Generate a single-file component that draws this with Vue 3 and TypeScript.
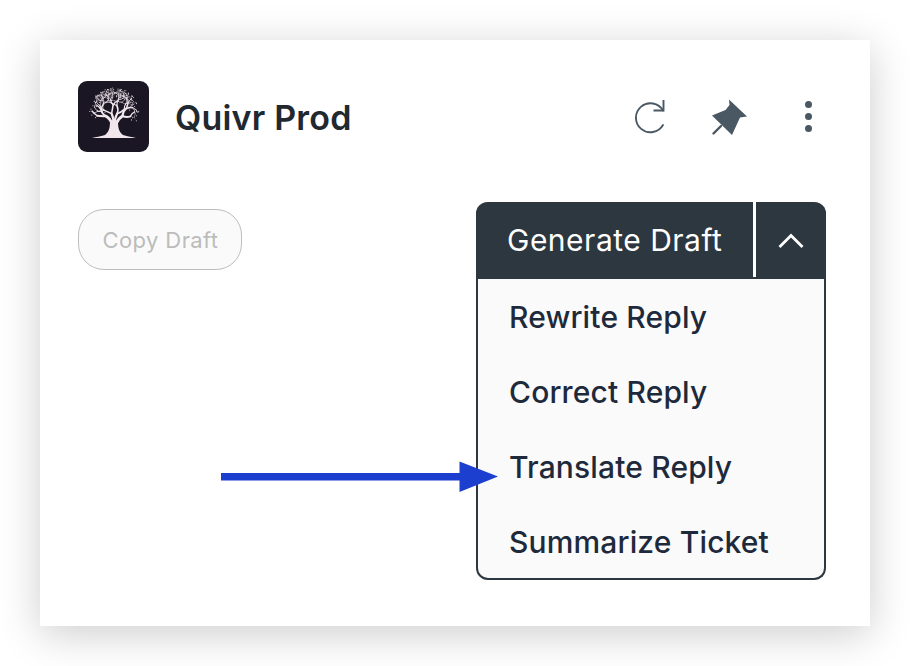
<script setup lang="ts">
interface Branch { d: string; w: number }
interface Dot { x: number; y: number }

const items: string[] = ['Rewrite Reply', 'Correct Reply', 'Translate Reply', 'Summarize Ticket']

// Deterministic branching tree for the logo (logo box is 71x71).
const branches: Branch[] = []
const tips: Dot[] = []
const cx = 36
const cy = 32
const crown = 23

function grow(x: number, y: number, angle: number, len: number, w: number, depth: number, seed: number): void {
  const wobble = Math.sin(seed * 12.9898) * 0.42
  const a = angle + wobble
  const mx = x + Math.cos(angle - wobble) * len * 0.5
  const my = y + Math.sin(angle - wobble) * len * 0.5
  const ex = mx + Math.cos(a) * len * 0.5
  const ey = my + Math.sin(a) * len * 0.5
  if (Math.hypot(ex - cx, ey - cy) > crown) {
    tips.push({ x: x + Math.cos(a) * 2.4, y: y + Math.sin(a) * 2.4 })
    return
  }
  branches.push({ d: `M${x.toFixed(1)} ${y.toFixed(1)}Q${mx.toFixed(1)} ${my.toFixed(1)} ${ex.toFixed(1)} ${ey.toFixed(1)}`, w })
  if (depth === 0) {
    tips.push({ x: ex + Math.cos(a) * 2, y: ey + Math.sin(a) * 2 })
    return
  }
  const spread = 0.42 + Math.abs(Math.sin(seed * 7.13)) * 0.25
  grow(ex, ey, a - spread, len * 0.78, w * 0.7, depth - 1, seed * 1.31 + 1.7)
  grow(ex, ey, a + spread, len * 0.78, w * 0.7, depth - 1, seed * 1.57 + 2.9)
}

const up = -Math.PI / 2
grow(34, 43, up - 0.68, 11, 2.8, 6, 1.3)
grow(38, 43, up + 0.68, 11, 2.8, 6, 2.1)
grow(35, 43, up - 0.14, 11, 2.2, 6, 3.7)
grow(37, 43, up + 0.2, 11, 2.2, 6, 4.9)
</script>

<template>
  <main class="page">
    <section class="card">
      <header class="header">
        <div class="brand">
          <div class="logo">
            <svg viewBox="0 0 71 71" width="71" height="71" aria-hidden="true">
              <path d="M32 40H40C40 47 41 51 45 54C50 55.500 54 56 58 57H14C18 56 22 55.500 27 54C31 51 32 47 32 40Z" fill="#f1e6eb" />
              <g fill="none" stroke="#f1e6eb" stroke-linecap="round">
                <path v-for="(b, i) in branches" :key="i" :d="b.d" :stroke-width="b.w" />
              </g>
              <circle v-for="(t, i) in tips" :key="i" :cx="t.x" :cy="t.y" r="0.55" fill="#e6dae0" />
            </svg>
          </div>
          <h1 class="title">Quivr Prod</h1>
        </div>
        <div class="actions">
          <svg class="icon" viewBox="0 0 32 36" width="32" height="36" aria-hidden="true">
            <path d="M29 26A14.500 14.500 0 1 1 29 11.500" fill="none" stroke="currentColor" stroke-width="1.9" stroke-linecap="round" />
            <path d="M29.500 1V11.500H19.500" fill="none" stroke="currentColor" stroke-width="1.9" />
          </svg>
          <svg class="icon pin" viewBox="0 0 38 38" width="38" height="38" aria-hidden="true">
            <path d="M19 1.500L37 18.500L30 19.500L22 37L2 17.500L15.500 12L19.500 7Z" fill="currentColor" />
            <path d="M3.500 35.500L11 28" stroke="currentColor" stroke-width="2.400" stroke-linecap="round" />
          </svg>
          <span class="dots"><i></i><i></i><i></i></span>
        </div>
      </header>

      <div class="controls">
        <button class="copy" type="button" disabled>Copy Draft</button>
        <div class="dropdown">
          <div class="bar">
            <button class="generate" type="button">Generate Draft</button>
            <button class="toggle" type="button" aria-label="Collapse">
              <svg viewBox="0 0 26 16" width="26" height="16" aria-hidden="true">
                <path d="M1.500 14L13 2.500L24.500 14" fill="none" stroke="#fff" stroke-width="2.800" />
              </svg>
            </button>
          </div>
          <ul class="menu">
            <li v-for="item in items" :key="item">{{ item }}</li>
          </ul>
        </div>
      </div>

      <svg class="arrow" viewBox="0 0 278 34" width="278" height="34" aria-hidden="true">
        <path d="M0 13H238.500V1.500L277 16.500L238.500 32V20.500H0Z" fill="#1c3fd0" />
      </svg>
    </section>
  </main>
</template>

<style>
html,
body {
  margin: 0;
  background: #ffffff;
}
</style>

<style scoped>
.page {
  width: 910px;
  height: 666px;
  box-sizing: border-box;
  padding: 40px;
  overflow: hidden;
  font-family: Inter, "Liberation Sans", sans-serif;
}

.card {
  position: relative;
  box-sizing: border-box;
  width: 830px;
  height: 586px;
  padding: 41px 44px 0 38px;
  background: #ffffff;
  box-shadow: 0 8px 40px rgba(0, 0, 0, 0.2);
}

.header {
  display: flex;
  align-items: center;
  justify-content: space-between;
  height: 71px;
}

.brand {
  display: flex;
  align-items: center;
  gap: 26px;
}

.logo {
  width: 71px;
  height: 71px;
  border-radius: 9px;
  overflow: hidden;
  background: #1a1624;
}

.logo svg {
  display: block;
}

.title {
  margin: 2px 0 0;
  font-size: 34px;
  line-height: 40px;
  font-weight: 600;
  letter-spacing: 0.2px;
  color: #1f292f;
}

.actions {
  display: flex;
  align-items: center;
  color: #4a5863;
  margin-right: 14px;
}

.icon {
  display: block;
}

.pin {
  margin-left: 44px;
}

.dots {
  display: flex;
  flex-direction: column;
  gap: 5px;
  margin-left: 57px;
}

.dots i {
  display: block;
  width: 7px;
  height: 7px;
  border-radius: 50%;
  background: currentColor;
}

.controls {
  display: flex;
  align-items: flex-start;
  justify-content: space-between;
  margin-top: 50px;
}

.copy {
  width: 164px;
  height: 61px;
  margin-top: 7px;
  padding: 0 0 0 1px;
  border: 1px solid #bdbdbd;
  border-radius: 26px;
  background: #fafafa;
  color: #bcbcbc;
  font: 400 22px Inter, "Liberation Sans", sans-serif;
  letter-spacing: 0.4px;
}

.dropdown {
  box-sizing: border-box;
  width: 350px;
  height: 378px;
  border: 2px solid #2d373f;
  border-top: 0;
  border-radius: 12px;
  background: #fafafa;
}

.bar {
  display: flex;
  height: 77px;
  margin: 0 -2px;
  border-radius: 12px 12px 0 0;
  background: #2d373f;
}

.bar button {
  border: 0;
  padding: 0;
  background: transparent;
  color: #ffffff;
}

.bar .generate {
  box-sizing: border-box;
  width: 280px;
  height: 75px;
  padding: 1px 0 0 31px;
  border-right: 3px solid #ffffff;
  font: 400 30px Inter, "Liberation Sans", sans-serif;
  letter-spacing: 0.5px;
  text-align: left;
}

.toggle {
  flex: 1;
  display: flex;
  align-items: center;
  justify-content: center;
}

.menu {
  margin: 0;
  padding: 0;
  list-style: none;
}

.menu li {
  height: 75px;
  line-height: 77px;
  padding-left: 31px;
  font-size: 30px;
  font-weight: 450;
  letter-spacing: 0.15px;
  color: #1e2a3b;
}

.arrow {
  position: absolute;
  left: 181px;
  top: 420px;
}
</style>
